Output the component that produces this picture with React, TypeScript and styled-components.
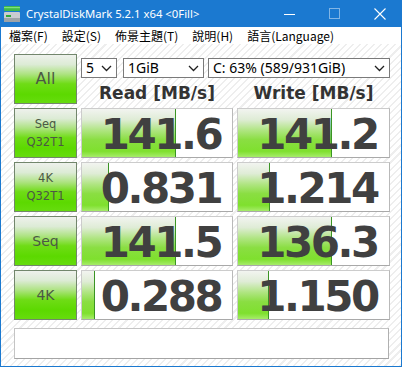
import React from "react";
import styled, { createGlobalStyle } from "styled-components";

const GlobalStyle = createGlobalStyle`
  html, body { margin: 0; padding: 0; background: #ffffff; }
  body { font-family: "Noto Sans", "Noto Sans CJK TC", sans-serif; }
  * { box-sizing: border-box; }
`;

const Window = styled.div`
  width: 402px;
  height: 367px;
  background: #1b79d0;
  display: flex;
  flex-direction: column;
  padding: 0 1px 1px 1px;
`;

const TitleBar = styled.div`
  height: 27px;
  display: flex;
  align-items: center;
  color: #ffffff;
  margin: 0 -1px;
`;

const AppIcon = styled.svg`
  margin-left: 4px;
  flex: none;
`;

const Title = styled.div`
  margin-left: 6px;
  font-family: "Noto Sans", sans-serif;
  font-size: 11.3px;
  white-space: nowrap;
  flex: 1;
`;

const CtrlButton = styled.div`
  width: 45px;
  height: 27px;
  display: flex;
  align-items: center;
  justify-content: center;
  flex: none;
`;

const MenuBar = styled.div`
  height: 17px;
  background: #ffffff;
  display: flex;
  align-items: center;
  gap: 14px;
  padding-left: 8px;
  font-family: "Noto Sans CJK TC", "Noto Sans", sans-serif;
  font-size: 12px;
  color: #000000;
`;

const MenuItem = styled.span`
  line-height: 17px;
  white-space: nowrap;
`;

const Content = styled.div`
  flex: 1;
  background-color: #ffffff;
  background-image: repeating-linear-gradient(
    135deg,
    #ffffff 0px,
    #ffffff 3.5px,
    #eeeeee 3.5px,
    #eeeeee 5px
  );
  padding: 10px 0 0 13px;
`;

const Grid = styled.div`
  display: grid;
  grid-template-columns: 63px 152px 153px;
  grid-auto-rows: 50px;
  column-gap: 4px;
  row-gap: 4px;
`;

const TestButton = styled.div<{ $size: number }>`
  border: 1px solid #72866c;
  background: linear-gradient(
    to bottom,
    #eef1ec 0%,
    #dcebd5 20%,
    #ade381 40%,
    #6fdc16 60%,
    #5cd900 82%,
    #66dc0e 100%
  );
  color: #4b5944;
  display: flex;
  flex-direction: column;
  align-items: center;
  justify-content: center;
  font-family: "DejaVu Sans", sans-serif;
  font-size: ${(p) => p.$size}px;
  line-height: 18px;
`;

const TopCell = styled.div`
  grid-column: 2 / span 2;
  display: flex;
  flex-direction: column;
`;

const SelectRow = styled.div`
  display: flex;
  margin-top: 4px;
  height: 20px;
`;

const SelectBox = styled.div<{ $w: number; $ml: number }>`
  width: ${(p) => p.$w}px;
  margin-left: ${(p) => p.$ml}px;
  height: 20px;
  border: 1px solid #7a7a7a;
  background: #ffffff;
  display: flex;
  align-items: center;
  padding: 0 4px 0 4px;
  font-family: "Noto Sans", sans-serif;
  font-size: 14px;
  color: #000000;
  white-space: nowrap;
`;

const SelectText = styled.span`
  flex: 1;
  line-height: 18px;
`;

const HeaderRow = styled.div`
  display: grid;
  grid-template-columns: 152px 153px;
  column-gap: 4px;
  margin-top: 5px;
`;

const Header = styled.div`
  text-align: center;
  font-family: "DejaVu Sans", sans-serif;
  font-weight: bold;
  font-size: 17px;
  line-height: 20px;
  color: #333333;
`;

const ValueBox = styled.div`
  position: relative;
  background: #ffffff;
  border: 1px solid #cccccc;
  border-bottom-color: #a9a9a9;
  border-right-color: #b9b9b9;
  overflow: hidden;
`;

const Bar = styled.div`
  position: absolute;
  left: 0;
  top: 0;
  bottom: 0;
  background: linear-gradient(
    to bottom,
    #f2f4f0 0%,
    #dfecd6 22%,
    #b0e583 44%,
    #8ade42 64%,
    #7fe02e 88%,
    #a6ec6a 100%
  );
  border-right: 1px solid #3a9424;
`;

const Value = styled.div`
  position: relative;
  height: 100%;
  display: flex;
  align-items: center;
  justify-content: center;
  padding: 3px 0 0 8px;
  font-family: "DejaVu Sans", sans-serif;
  font-weight: bold;
  font-size: 42px;
  letter-spacing: -2.5px;
  color: #404040;
  line-height: 1;
`;

const Comment = styled.div`
  margin-top: 8px;
  width: 375px;
  height: 31px;
  background: #ffffff;
  border: 1px solid #c4c4c4;
  border-bottom-color: #a4a4a4;
  border-right-color: #b0b0b0;
`;

const Chevron = () => (
  <svg width="11" height="7" viewBox="0 0 11 7">
    <path d="M1 1 L5.5 5.5 L10 1" fill="none" stroke="#202020" strokeWidth="1.3" />
  </svg>
);

const rows = [
  { label: ["Seq", "Q32T1"], read: "141.6", rw: 94, write: "141.2", ww: 94 },
  { label: ["4K", "Q32T1"], read: "0.831", rw: 27, write: "1.214", ww: 32 },
  { label: ["Seq"], read: "141.5", rw: 94, write: "136.3", ww: 94 },
  { label: ["4K"], read: "0.288", rw: 13, write: "1.150", ww: 31 },
];

export default function App() {
  return (
    <>
      <GlobalStyle />
      <Window>
        <TitleBar>
          <AppIcon width="16" height="16" viewBox="0 0 16 16">
            <rect x="0" y="0" width="16" height="5" rx="1" fill="#3fb94a" />
            <rect x="0" y="1" width="16" height="1.2" fill="#7ee07f" />
            <rect x="0" y="6" width="16" height="10" rx="1" fill="#c9ccd0" />
            <rect x="0" y="12" width="16" height="4" fill="#9da3a8" />
            <rect x="2" y="9" width="5" height="2" fill="#2fa83a" />
          </AppIcon>
          <Title>CrystalDiskMark 5.2.1 x64 &lt;0Fill&gt;</Title>
          <CtrlButton>
            <svg width="12" height="12" viewBox="0 0 12 12">
              <rect x="0" y="6" width="11" height="1" fill="#ffffff" />
            </svg>
          </CtrlButton>
          <CtrlButton>
            <svg width="11" height="11" viewBox="0 0 11 11">
              <rect x="0.5" y="0.5" width="10" height="10" fill="none" stroke="#ffffff" strokeOpacity="0.45" />
            </svg>
          </CtrlButton>
          <CtrlButton>
            <svg width="12" height="12" viewBox="0 0 12 12">
              <path d="M0.5 0.5 L11.5 11.5 M11.5 0.5 L0.5 11.5" stroke="#ffffff" strokeWidth="1.1" />
            </svg>
          </CtrlButton>
        </TitleBar>
        <MenuBar>
          <MenuItem>檔案(F)</MenuItem>
          <MenuItem>設定(S)</MenuItem>
          <MenuItem>佈景主題(T)</MenuItem>
          <MenuItem>說明(H)</MenuItem>
          <MenuItem>語言(Language)</MenuItem>
        </MenuBar>
        <Content>
          <Grid>
            <TestButton $size={16}>All</TestButton>
            <TopCell>
              <SelectRow>
                <SelectBox $w={36} $ml={0}>
                  <SelectText>5</SelectText>
                  <Chevron />
                </SelectBox>
                <SelectBox $w={81} $ml={6}>
                  <SelectText>1GiB</SelectText>
                  <Chevron />
                </SelectBox>
                <SelectBox $w={182} $ml={4}>
                  <SelectText>C: 63% (589/931GiB)</SelectText>
                  <Chevron />
                </SelectBox>
              </SelectRow>
              <HeaderRow>
                <Header>Read [MB/s]</Header>
                <Header>Write [MB/s]</Header>
              </HeaderRow>
            </TopCell>
            {rows.map((r) => (
              <React.Fragment key={r.read + r.write}>
                <TestButton $size={r.label.length > 1 ? 11.5 : 14}>
                  {r.label.map((l) => (
                    <span key={l}>{l}</span>
                  ))}
                </TestButton>
                <ValueBox>
                  <Bar style={{ width: r.rw }} />
                  <Value>{r.read}</Value>
                </ValueBox>
                <ValueBox>
                  <Bar style={{ width: r.ww }} />
                  <Value>{r.write}</Value>
                </ValueBox>
              </React.Fragment>
            ))}
          </Grid>
          <Comment />
        </Content>
      </Window>
    </>
  );
}
